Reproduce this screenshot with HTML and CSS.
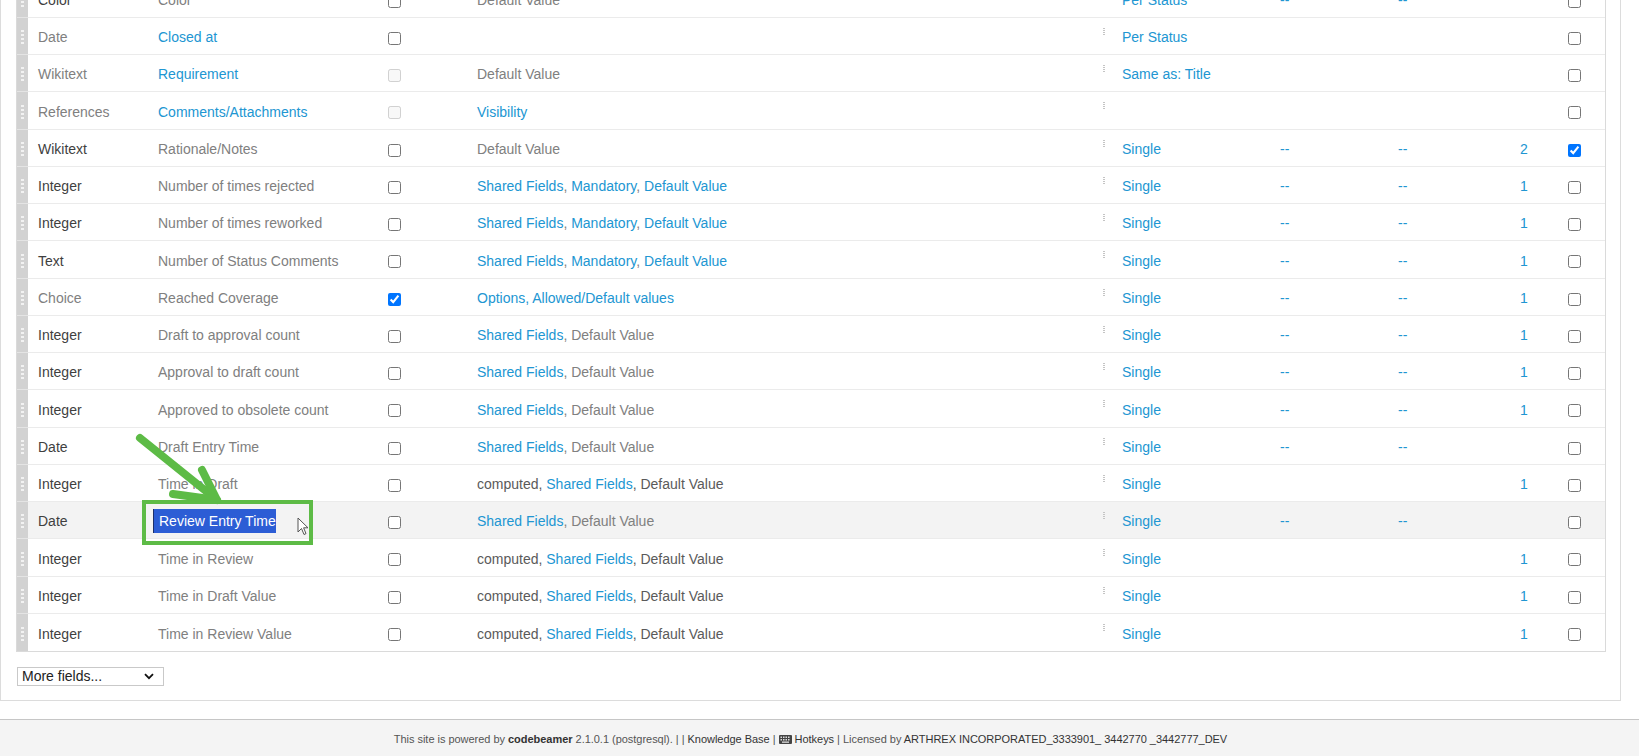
FILE: index.html
```html
<!DOCTYPE html>
<html>
<head>
<meta charset="utf-8">
<link rel="stylesheet" href="styles.css">
</head>
<body>
<div class="panel">
<table class="grid">
<colgroup>
<col class="c-grip"><col class="c-type"><col class="c-name"><col class="c-cb"><col class="c-cfg"><col class="c-dots"><col class="c-mult"><col class="c-dash1"><col class="c-dash2"><col class="c-num"><col class="c-cb2">
</colgroup>
<tbody>
<tr><td class="grip"><span class="gdots"></span></td><td class="d">Color</td><td class="g">Color</td><td><input type="checkbox"></td><td class="g">Default Value</td><td class="dots"><span class="vdots"></span></td><td class="l">Per Status</td><td class="l">--</td><td class="l">--</td><td></td><td><input type="checkbox"></td></tr>
<tr><td class="grip"><span class="gdots"></span></td><td class="g">Date</td><td class="l">Closed at</td><td><input type="checkbox"></td><td></td><td class="dots"><span class="vdots"></span></td><td class="l">Per Status</td><td></td><td></td><td></td><td><input type="checkbox"></td></tr>
<tr><td class="grip"><span class="gdots"></span></td><td class="g">Wikitext</td><td class="l">Requirement</td><td><input type="checkbox" disabled></td><td class="g">Default Value</td><td class="dots"><span class="vdots"></span></td><td class="l">Same as: Title</td><td></td><td></td><td></td><td><input type="checkbox"></td></tr>
<tr><td class="grip"><span class="gdots"></span></td><td class="g">References</td><td class="l">Comments/Attachments</td><td><input type="checkbox" disabled></td><td class="l">Visibility</td><td class="dots"><span class="vdots"></span></td><td></td><td></td><td></td><td></td><td><input type="checkbox"></td></tr>
<tr><td class="grip"><span class="gdots"></span></td><td class="d">Wikitext</td><td class="g">Rationale/Notes</td><td><input type="checkbox"></td><td class="g">Default Value</td><td class="dots"><span class="vdots"></span></td><td class="l">Single</td><td class="l">--</td><td class="l">--</td><td class="l">2</td><td><input type="checkbox" checked></td></tr>
<tr><td class="grip"><span class="gdots"></span></td><td class="d">Integer</td><td class="g">Number of times rejected</td><td><input type="checkbox"></td><td class="l">Shared Fields<span class="g">,</span> Mandatory<span class="g">,</span> Default Value</td><td class="dots"><span class="vdots"></span></td><td class="l">Single</td><td class="l">--</td><td class="l">--</td><td class="l">1</td><td><input type="checkbox"></td></tr>
<tr><td class="grip"><span class="gdots"></span></td><td class="d">Integer</td><td class="g">Number of times reworked</td><td><input type="checkbox"></td><td class="l">Shared Fields<span class="g">,</span> Mandatory<span class="g">,</span> Default Value</td><td class="dots"><span class="vdots"></span></td><td class="l">Single</td><td class="l">--</td><td class="l">--</td><td class="l">1</td><td><input type="checkbox"></td></tr>
<tr><td class="grip"><span class="gdots"></span></td><td class="d">Text</td><td class="g">Number of Status Comments</td><td><input type="checkbox"></td><td class="l">Shared Fields<span class="g">,</span> Mandatory<span class="g">,</span> Default Value</td><td class="dots"><span class="vdots"></span></td><td class="l">Single</td><td class="l">--</td><td class="l">--</td><td class="l">1</td><td><input type="checkbox"></td></tr>
<tr><td class="grip"><span class="gdots"></span></td><td class="g">Choice</td><td class="g">Reached Coverage</td><td><input type="checkbox" checked></td><td class="l">Options, Allowed/Default values</td><td class="dots"><span class="vdots"></span></td><td class="l">Single</td><td class="l">--</td><td class="l">--</td><td class="l">1</td><td><input type="checkbox"></td></tr>
<tr><td class="grip"><span class="gdots"></span></td><td class="d">Integer</td><td class="g">Draft to approval count</td><td><input type="checkbox"></td><td class="g"><span class="l">Shared Fields</span>, Default Value</td><td class="dots"><span class="vdots"></span></td><td class="l">Single</td><td class="l">--</td><td class="l">--</td><td class="l">1</td><td><input type="checkbox"></td></tr>
<tr><td class="grip"><span class="gdots"></span></td><td class="d">Integer</td><td class="g">Approval to draft count</td><td><input type="checkbox"></td><td class="g"><span class="l">Shared Fields</span>, Default Value</td><td class="dots"><span class="vdots"></span></td><td class="l">Single</td><td class="l">--</td><td class="l">--</td><td class="l">1</td><td><input type="checkbox"></td></tr>
<tr><td class="grip"><span class="gdots"></span></td><td class="d">Integer</td><td class="g">Approved to obsolete count</td><td><input type="checkbox"></td><td class="g"><span class="l">Shared Fields</span>, Default Value</td><td class="dots"><span class="vdots"></span></td><td class="l">Single</td><td class="l">--</td><td class="l">--</td><td class="l">1</td><td><input type="checkbox"></td></tr>
<tr><td class="grip"><span class="gdots"></span></td><td class="d">Date</td><td class="g">Draft Entry Time</td><td><input type="checkbox"></td><td class="g"><span class="l">Shared Fields</span>, Default Value</td><td class="dots"><span class="vdots"></span></td><td class="l">Single</td><td class="l">--</td><td class="l">--</td><td></td><td><input type="checkbox"></td></tr>
<tr><td class="grip"><span class="gdots"></span></td><td class="d">Integer</td><td class="g">Time in Draft</td><td><input type="checkbox"></td><td class="d2">computed, <span class="l">Shared Fields</span>, Default Value</td><td class="dots"><span class="vdots"></span></td><td class="l">Single</td><td></td><td></td><td class="l">1</td><td><input type="checkbox"></td></tr>
<tr class="hl"><td class="grip"><span class="gdots"></span></td><td class="d">Date</td><td class="g"><span class="sel">Review Entry Time</span></td><td><input type="checkbox"></td><td class="g"><span class="l">Shared Fields</span>, Default Value</td><td class="dots"><span class="vdots"></span></td><td class="l">Single</td><td class="l">--</td><td class="l">--</td><td></td><td><input type="checkbox"></td></tr>
<tr><td class="grip"><span class="gdots"></span></td><td class="d">Integer</td><td class="g">Time in Review</td><td><input type="checkbox"></td><td class="d2">computed, <span class="l">Shared Fields</span>, Default Value</td><td class="dots"><span class="vdots"></span></td><td class="l">Single</td><td></td><td></td><td class="l">1</td><td><input type="checkbox"></td></tr>
<tr><td class="grip"><span class="gdots"></span></td><td class="d">Integer</td><td class="g">Time in Draft Value</td><td><input type="checkbox"></td><td class="d2">computed, <span class="l">Shared Fields</span>, Default Value</td><td class="dots"><span class="vdots"></span></td><td class="l">Single</td><td></td><td></td><td class="l">1</td><td><input type="checkbox"></td></tr>
<tr><td class="grip"><span class="gdots"></span></td><td class="d">Integer</td><td class="g">Time in Review Value</td><td><input type="checkbox"></td><td class="d2">computed, <span class="l">Shared Fields</span>, Default Value</td><td class="dots"><span class="vdots"></span></td><td class="l">Single</td><td></td><td></td><td class="l">1</td><td><input type="checkbox"></td></tr>
</tbody>
</table>
<div class="more">
<select class="more-select"><option>More fields...</option></select>
<svg class="chev" width="10" height="7" viewBox="0 0 10 7"><path d="M1 1.2 L5 5.2 L9 1.2" fill="none" stroke="#111" stroke-width="1.8"/></svg>
</div>
</div>
<div class="footer">This site is powered by <b class="fb">codebeamer</b> 2.1.0.1 (postgresql). | | <span class="fl">Knowledge Base</span> | <svg class="kbd" width="13" height="9" viewBox="0 0 13 9"><rect x="0" y="0" width="13" height="9" rx="1" fill="#444"/><g fill="#ddd"><rect x="1.5" y="1.5" width="1.5" height="1.5"/><rect x="4" y="1.5" width="1.5" height="1.5"/><rect x="6.5" y="1.5" width="1.5" height="1.5"/><rect x="9" y="1.5" width="1.5" height="1.5"/><rect x="1.5" y="4" width="1.5" height="1.5"/><rect x="4" y="4" width="1.5" height="1.5"/><rect x="6.5" y="4" width="1.5" height="1.5"/><rect x="9" y="4" width="1.5" height="1.5"/><rect x="3" y="6.5" width="7" height="1.3"/></g></svg> <span class="fl">Hotkeys</span> | Licensed by <span class="fl">ARTHREX INCORPORATED_3333901_ 3442770 _3442777_DEV</span></div>

<div class="callout"></div>
<svg class="arrow" width="130" height="110" viewBox="0 0 130 110"><g fill="none" stroke="#5dbb46" stroke-width="8" stroke-linecap="round" stroke-linejoin="round"><path d="M20 18 L97 80"/><path d="M82 50 L97 80 L53 74"/></g></svg>
<svg class="cursor" width="12" height="19" viewBox="0 0 12 19"><path d="M1 1 L1 15 L4.5 11.5 L7 17.5 L9 16.6 L6.6 10.8 L11 10.8 Z" fill="#fff" stroke="#555" stroke-width="1"/></svg>
</body>
</html>
```
FILE: styles.css
```css
html, body {
  margin: 0;
  padding: 0;
  background: #fff;
}
body {
  font-family: "Liberation Sans", Arial, sans-serif;
  font-size: 14px;
  color: #444;
}
.panel {
  width: 1621px;
  box-sizing: border-box;
  margin-top: -40px;
  border: 1px solid #dcdcdc;
  padding: 18.7px 0 14px 15px;
}
.grid {
  border-collapse: separate;
  border-spacing: 0;
  table-layout: fixed;
  width: 1590px;
  border: 1px solid #dadada;
}
.c-grip { width: 11px; }
.c-type { width: 120px; }
.c-name { width: 230px; }
.c-cb { width: 89px; }
.c-cfg { width: 626px; }
.c-dots { width: 19px; }
.c-mult { width: 158px; }
.c-dash1 { width: 118px; }
.c-dash2 { width: 122px; }
.c-num { width: 48px; }
.c-cb2 { width: 47px; }
.grid tr { height: 37.25px; }
.grid td {
  padding: 2px 0 0 10px;
  border-bottom: 1px solid #ebebeb;
  vertical-align: middle;
  white-space: nowrap;
  overflow: hidden;
  line-height: 16px;
}
.grid tr:last-child td { border-bottom: none; }
.grid td.grip {
  padding: 0;
  background: #d2d2d2;
  text-align: center;
  border-bottom-color: #e4e4e4;
}
.gdots {
  display: inline-block;
  width: 3px;
  height: 14px;
  vertical-align: middle;
  background: repeating-linear-gradient(to bottom, #f2f2f2 0 2px, transparent 2px 4px);
}
.grid td.dots {
  vertical-align: top;
  padding-top: 10px;
}
.vdots {
  display: block;
  width: 2px;
  height: 8px;
  background: repeating-linear-gradient(to bottom, #c4c4c4 0 1px, transparent 1px 2px);
}
.grid input[type="checkbox"] {
  margin: 0;
  width: 13px;
  height: 13px;
  vertical-align: middle;
}
.hl td { background: #f3f3f3; }
.d { color: #3f3f3f; }
.g { color: #808080; }
.d2 { color: #5a5a5a; }
.d2 > .l, .g > .l { color: #2196d2; }
.l { color: #2196d2; }
.l > .g { color: #808080; }
.sel {
  background: #2c5dd5;
  color: #fff;
  padding: 4px 0 4px 5px;
  margin-left: -5px;
  border-left: 1px solid #1c2f6a;
}
.more {
  position: relative;
  width: 147px;
  margin-top: 15px;
  margin-left: 1px;
}
.more-select {
  appearance: none;
  -webkit-appearance: none;
  display: block;
  width: 147px;
  height: 19px;
  border: 1px solid #c9c9c9;
  border-radius: 0;
  background: #fff;
  font-family: "Liberation Sans", Arial, sans-serif;
  font-size: 14px;
  color: #222;
  padding: 0 0 0 4px;
  line-height: 17px;
}
.chev {
  position: absolute;
  right: 10px;
  top: 6px;
}
.footer {
  margin-top: 18px;
  border-top: 1px solid #c6c6c6;
  background: #f4f4f4;
  padding: 11px 18px 14px 0;
  text-align: center;
  font-size: 11px;
  letter-spacing: -0.03px;
  line-height: 16px;
  color: #555;
}
.fb { color: #333; font-weight: bold; }
.fl { color: #333; }
.kbd { vertical-align: -1px; }
.callout {
  position: absolute;
  left: 142px;
  top: 500px;
  width: 171px;
  height: 45px;
  box-sizing: border-box;
  border: 4px solid #5dbb46;
}
.arrow {
  position: absolute;
  left: 120px;
  top: 420px;
}
.cursor {
  position: absolute;
  left: 297px;
  top: 517px;
}
```
